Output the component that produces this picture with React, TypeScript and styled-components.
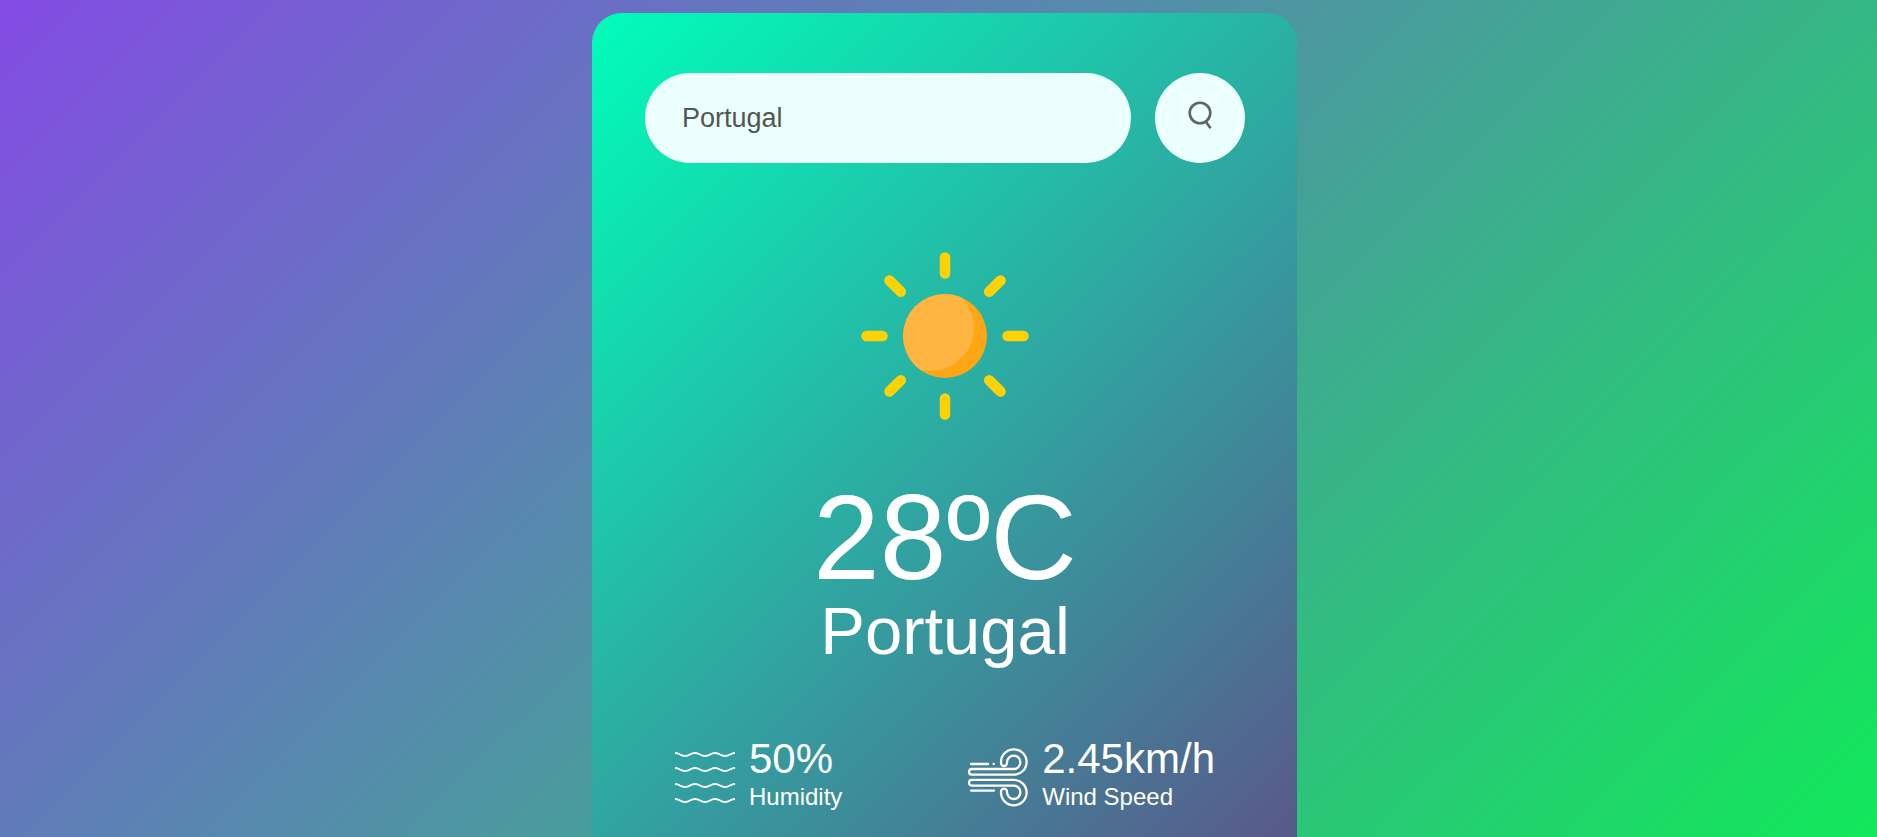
import React, { useState } from 'react';
import styled, { createGlobalStyle } from 'styled-components';

const GlobalStyle = createGlobalStyle`
  *, *::before, *::after { box-sizing: border-box; }
  html { min-height: 100%; }
  body {
    margin: 0;
    min-height: 100vh;
    font-family: 'Liberation Sans', Arial, sans-serif;
    background: linear-gradient(135deg, #844be4, #10ea58);
  }
`;

const Page = styled.main`
  display: flex;
  justify-content: center;
  padding: 13px 0 0 12px;
`;

const Card = styled.section`
  width: 90%;
  max-width: 705px;
  padding: 60px 52px 60px 53px;
  border-radius: 30px;
  background: linear-gradient(135deg, #00feba, #5b548a);
  color: #fff;
  text-align: center;
`;

const Search = styled.form`
  display: flex;
  align-items: center;
  gap: 24px;
`;

const SearchInput = styled.input`
  flex: 1;
  min-width: 0;
  height: 90px;
  padding: 15px 37px;
  border: 0;
  outline: 0;
  border-radius: 45px;
  background: #ebfffc;
  color: #555;
  font: 27px 'Liberation Sans', Arial, sans-serif;
`;

const SearchButton = styled.button`
  display: flex;
  align-items: center;
  justify-content: center;
  flex: none;
  width: 90px;
  height: 90px;
  padding: 0;
  border: 0;
  border-radius: 50%;
  background: #ebfffc;
  cursor: pointer;
`;

const SearchIcon = styled.svg`
  width: 24px;
  height: 36px;
  fill: none;
  stroke: #626262;
  stroke-width: 2.6;
`;

const Weather = styled.div`
  display: flex;
  flex-direction: column;
  align-items: center;
`;

const SunIcon = styled.svg`
  width: 168px;
  height: 168px;
  margin: 89px 0 57px;
`;

const Temperature = styled.h1`
  margin: 0;
  font-size: 120px;
  line-height: 120px;
  font-weight: 500;
`;

const City = styled.h2`
  margin: 0;
  font-size: 67px;
  line-height: 68px;
  font-weight: 500;
`;

const Details = styled.div`
  display: flex;
  justify-content: space-between;
  margin-top: 79px;
  padding: 0 30px;
`;

const Detail = styled.div`
  display: flex;
  align-items: center;
  text-align: left;
`;

const DetailIcon = styled.svg`
  width: 60px;
  height: 60px;
  margin-right: 14px;
  fill: none;
  stroke: #fff;
  stroke-width: 2.3;
  stroke-linecap: round;
`;

const Value = styled.p`
  margin: -9px 0 0;
  font-size: 42px;
  line-height: 48px;
`;

const Label = styled.p`
  margin: 0;
  font-size: 24px;
  line-height: 28px;
`;

const rays = [0, 45, 90, 135, 180, 225, 270, 315];
const waves = [6, 21, 37, 52];

export default function App() {
  const [city, setCity] = useState('Portugal');

  return (
    <>
      <GlobalStyle />
      <Page>
        <Card>
          <Search onSubmit={(event) => event.preventDefault()}>
            <SearchInput
              type="text"
              aria-label="City name"
              spellCheck={false}
              value={city}
              onChange={(event) => setCity(event.target.value)}
            />
            <SearchButton type="submit" aria-label="Search">
              <SearchIcon viewBox="0 0 24 36" aria-hidden="true">
                <circle cx="12" cy="13" r="10.3" />
                <path d="M18 22 22.6 28.2" />
              </SearchIcon>
            </SearchButton>
          </Search>
          <Weather>
            <SunIcon viewBox="0 0 168 168" role="img" aria-label="Sunny">
              <defs>
                <clipPath id="sun-disc">
                  <circle cx="84" cy="84" r="42" />
                </clipPath>
              </defs>
              {rays.map((angle) => (
                <path
                  key={angle}
                  d="M84 5.5V21.5"
                  stroke="#ffd205"
                  strokeWidth="10.5"
                  strokeLinecap="round"
                  transform={`rotate(${angle} 84 84)`}
                />
              ))}
              <circle cx="84" cy="84" r="42" fill="#ffa616" />
              <circle cx="70" cy="76" r="43" fill="#ffb542" clipPath="url(#sun-disc)" />
            </SunIcon>
            <Temperature>28ºC</Temperature>
            <City>Portugal</City>
          </Weather>
          <Details>
            <Detail>
              <DetailIcon viewBox="0 0 60 60" aria-hidden="true">
                {waves.map((y) => (
                  <path
                    key={y}
                    strokeWidth="2"
                    strokeLinecap="butt"
                    d={`M0 ${y - 1}C5 ${y - 1} 5 ${y + 2} 10 ${y + 2}S15 ${y - 1} 20 ${y - 1}S25 ${y + 2} 30 ${y + 2}S35 ${y - 1} 40 ${y - 1}S45 ${y + 2} 50 ${y + 2}S55 ${y - 1} 60 ${y - 1}`}
                  />
                ))}
              </DetailIcon>
              <div>
                <Value>50%</Value>
                <Label>Humidity</Label>
              </div>
            </Detail>
            <Detail>
              <DetailIcon viewBox="0 0 60 60" aria-hidden="true">
                <path d="M3 16H20M25.6 16H25.8M3 42.6H26" />
                <path d="M3.8 26.7A2.8 2.8 0 0 1 3.8 21H45.8A6.7 6.7 0 1 0 39 14.3V15A3 3 0 0 1 33 15V14A12.8 12.7 0 1 1 45.8 26.7Z" />
                <path d="M3.8 31.9A2.8 2.8 0 0 0 3.8 37.6H45.8A6.7 6.7 0 1 1 39 44.3V43.6A3 3 0 0 0 33 43.6V44.6A12.8 12.7 0 1 0 45.8 31.9Z" />
              </DetailIcon>
              <div>
                <Value>2.45km/h</Value>
                <Label>Wind Speed</Label>
              </div>
            </Detail>
          </Details>
        </Card>
      </Page>
    </>
  );
}
